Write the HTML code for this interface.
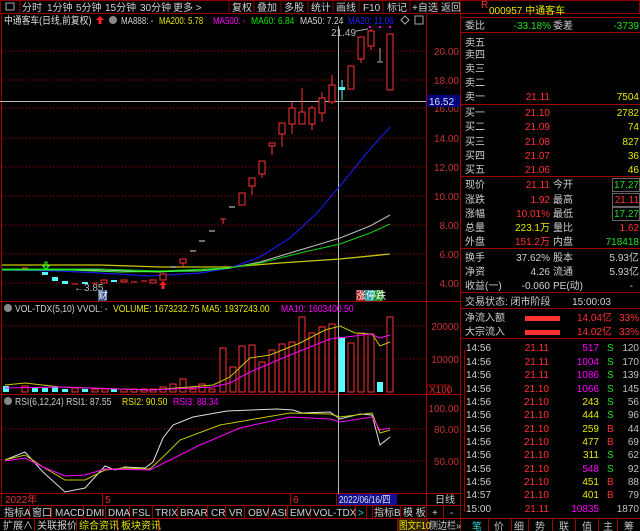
<!DOCTYPE html>
<html><head><meta charset="utf-8"><style>
html,body{margin:0;padding:0;background:#000;width:640px;height:531px;overflow:hidden}
svg{display:block}
text{font-family:"Liberation Sans","Noto Sans CJK SC",sans-serif;font-size:10px}
</style></head><body>
<svg width="640" height="531" viewBox="0 0 640 531" xmlns="http://www.w3.org/2000/svg">
<rect width="640" height="531" fill="#000"/>
<g fill="none" stroke="#8b0000">
<rect x="0.5" y="0.5" width="639" height="13"/>
<line x1="229" y1="0" x2="229" y2="13"/><line x1="254" y1="0" x2="254" y2="13"/><line x1="281" y1="0" x2="281" y2="13"/><line x1="308" y1="0" x2="308" y2="13"/><line x1="333" y1="0" x2="333" y2="13"/><line x1="359" y1="0" x2="359" y2="13"/><line x1="383" y1="0" x2="383" y2="13"/><line x1="410" y1="0" x2="410" y2="13"/><line x1="437" y1="0" x2="437" y2="13"/>
<line x1="20" y1="0" x2="20" y2="13"/>
</g>
<rect x="6" y="3" width="8" height="7" fill="none" stroke="#aaa"/>
<g fill="#d0d0d0">
<text x="22" y="11">分时</text><text x="47" y="11">1分钟</text><text x="76" y="11">5分钟</text><text x="105" y="11">15分钟</text><text x="140" y="11">30分钟</text><text x="173" y="11">更多 &gt;</text>
<text x="232" y="11">复权</text><text x="257" y="11">叠加</text><text x="284" y="11">多股</text><text x="311" y="11">统计</text><text x="336" y="11">画线</text><text x="363" y="11">F10</text><text x="387" y="11">标记</text><text x="412" y="11">+自选</text><text x="441" y="11">返回</text>
</g>
<g stroke="#a00000" fill="none">
<line x1="1.5" y1="14" x2="1.5" y2="505"/>
<line x1="426.5" y1="14" x2="426.5" y2="505"/>
<line x1="460.5" y1="0" x2="460.5" y2="531"/>
<line x1="0" y1="301.5" x2="460" y2="301.5"/>
<line x1="0" y1="394.5" x2="460" y2="394.5"/>
<line x1="0" y1="493.5" x2="460" y2="493.5"/>
<line x1="0" y1="505.5" x2="460" y2="505.5"/>
<line x1="0" y1="518.5" x2="640" y2="518.5"/>
</g>
<text transform="translate(4 24) scale(0.88 1)" fill="#e0e0e0" font-size="10">中通客车(日线,前复权)</text>
<g font-size="10">
<text transform="translate(121 24) scale(0.8 1)" fill="#d0d0d0">MA888: -</text>
<text transform="translate(159 24) scale(0.78 1)" fill="#e6e600">MA200: 5.78</text>
<text transform="translate(213 24) scale(0.8 1)" fill="#ff00ff">MA500: -</text>
<text transform="translate(251 24) scale(0.85 1)" fill="#00e600">MA60: 6.84</text>
<text transform="translate(300 24) scale(0.85 1)" fill="#d0d0d0">MA50: 7.24</text>
<text transform="translate(348 24) scale(0.82 1)" fill="#2020ff">MA20: 11.06</text>
</g>
<path d="M100 16 l4 4 h-2.5 v4 h-3 v-4 h-2.5z" fill="#ff2020"/>
<circle cx="113" cy="20" r="4" fill="#888"/>
<path d="M405 16 l4 4 l-4 4 l-4 -4z" fill="none" stroke="#aaa"/>
<rect x="415" y="16" width="8" height="8" fill="none" stroke="#aaa"/>
<g stroke="#a00000" stroke-dasharray="1,2">
<line x1="2" y1="51" x2="426" y2="51"/><line x1="2" y1="80" x2="426" y2="80"/><line x1="2" y1="108" x2="426" y2="108"/><line x1="2" y1="138" x2="426" y2="138"/><line x1="2" y1="167" x2="426" y2="167"/><line x1="2" y1="196" x2="426" y2="196"/><line x1="2" y1="225" x2="426" y2="225"/><line x1="2" y1="254" x2="426" y2="254"/><line x1="2" y1="283" x2="426" y2="283"/>
<line x1="2" y1="326" x2="426" y2="326"/><line x1="2" y1="359" x2="426" y2="359"/>
<line x1="2" y1="429" x2="426" y2="429"/><line x1="2" y1="461" x2="426" y2="461"/>
</g>
<g fill="#c83030" text-anchor="end" font-size="11">
<text x="459" y="55">20.00</text><text x="459" y="84">18.00</text><text x="459" y="112">16.00</text><text x="459" y="142">14.00</text><text x="459" y="171">12.00</text><text x="459" y="200">10.00</text><text x="459" y="229">8.00</text><text x="459" y="258">6.00</text><text x="459" y="287">4.00</text>
<text x="459" y="330">20000</text><text x="459" y="363">10000</text>
<text x="459" y="412">100.00</text><text x="459" y="433">80.00</text><text x="459" y="465">50.00</text>
</g>
<rect x="427" y="385" width="22" height="9" fill="none" stroke="#a00000"/>
<text x="429" y="393" fill="#c83030" font-size="9.5">X100</text>
<line x1="0" y1="101.5" x2="426" y2="101.5" stroke="#bbb"/>
<line x1="338.5" y1="26" x2="338.5" y2="505" stroke="#bbb"/>
<rect x="427" y="95" width="33" height="12" fill="#000080"/>
<text x="429" y="105" fill="#e0e0e0" font-size="11">16.52</text>
<polyline fill="none" stroke="#c8c800" stroke-width="1.3" points="2,265 100,265 160,267 230,267 280,263 340,259 390,254"/>
<polyline fill="none" stroke="#1818e0" stroke-width="1.2" points="2,270 60,271 100,273 150,276 200,273 230,268 260,257 290,238 315,215 340,186 365,155 390,127"/>
<polyline fill="none" stroke="#bbb" stroke-width="1.1" points="2,270 100,270 160,272 230,268 260,262 300,250 340,238 370,226 390,215"/>
<polyline fill="none" stroke="#10d010" stroke-width="1.1" points="2,269 100,269 160,271 230,268 260,263 300,253 340,244 370,233 390,224"/>
<polyline fill="none" stroke="#30ff30" stroke-width="1" points="2,270 70,270 120,272 200,271 230,268"/>
<g stroke="#ff3232" fill="#000">
<line x1="292" y1="102" x2="292" y2="134"/><rect x="289" y="108" width="6" height="16"/>
<line x1="302" y1="88" x2="302" y2="124"/><rect x="299" y="112" width="6" height="12"/>
<line x1="312" y1="106" x2="312" y2="130"/><rect x="309" y="108" width="6" height="16"/>
<line x1="322" y1="92" x2="322" y2="122"/><rect x="319" y="98" width="6" height="15"/>
<line x1="332" y1="75" x2="332" y2="104"/><rect x="329" y="85" width="6" height="17"/>
<rect x="348" y="66" width="6" height="23"/>
<line x1="361" y1="37" x2="361" y2="63"/><rect x="358" y="37" width="6" height="22"/>
<line x1="371" y1="29" x2="371" y2="50"/><rect x="368" y="31" width="6" height="15"/>
<rect x="387" y="34" width="6" height="56"/>
<line x1="282" y1="123" x2="282" y2="147"/><rect x="279" y="123" width="6" height="11"/>
<line x1="272" y1="143" x2="272" y2="155"/><rect x="269" y="143" width="6" height="3"/>
<line x1="262" y1="161" x2="262" y2="178"/><rect x="259" y="161" width="6" height="13"/>
<line x1="252" y1="178" x2="252" y2="195"/><rect x="249" y="178" width="6" height="8"/>
<rect x="239" y="193" width="6" height="12"/>
<line x1="223" y1="219" x2="223" y2="224"/><line x1="220" y1="219" x2="226" y2="219"/>
<line x1="183" y1="259" x2="183" y2="268"/><rect x="180" y="259" width="6" height="4"/>
<rect x="160" y="274" width="6" height="6"/>
<rect x="150" y="280" width="6" height="3"/>
<line x1="131" y1="282" x2="137" y2="282"/><line x1="141" y1="281" x2="147" y2="281"/>
<rect x="121" y="280" width="6" height="2"/>
<rect x="101" y="280" width="6" height="3"/>
<line x1="92" y1="283" x2="98" y2="283"/><line x1="72" y1="284" x2="78" y2="284"/>
<line x1="22" y1="268" x2="28" y2="268"/>
</g>
<line x1="380" y1="48" x2="380" y2="62" stroke="#aaa"/><line x1="377" y1="62" x2="383" y2="62" stroke="#aaa"/>
<g stroke="#ddd"><line x1="229" y1="207" x2="235" y2="207"/><line x1="209" y1="231" x2="215" y2="231"/><line x1="199" y1="241" x2="205" y2="241"/><line x1="190" y1="251" x2="196" y2="251"/><line x1="170" y1="267" x2="176" y2="267"/></g>
<g fill="#54ffff">
<rect x="339" y="87" width="6" height="3"/><line x1="342" y1="80" x2="342" y2="100" stroke="#54ffff"/>
<rect x="111" y="280" width="6" height="2"/><rect x="82" y="282" width="6" height="2"/><rect x="62" y="281" width="6" height="3"/><rect x="52" y="277" width="6" height="4"/><rect x="42" y="272" width="6" height="3"/>
</g>
<path d="M45 262 v4 h-2 l3 3 l3 -3 h-2 v-4z" fill="none" stroke="#20ff20"/>
<path d="M163 281 l4 4 h-2.5 v4 h-3 v-4 h-2.5z" fill="#ff2020"/>
<text x="74" y="291" fill="#bbb" font-size="10">←3.85</text>
<rect x="98" y="290" width="9" height="11" fill="#30508a"/><text x="98" y="299" fill="#fff" font-size="9">财</text>
<text x="331" y="36" fill="#bbb" font-size="10">21.49</text>
<line x1="356" y1="31" x2="368" y2="29" stroke="#aaa"/>
<g fill="#ff00ff"><rect x="369" y="26" width="2" height="2"/><rect x="379" y="26" width="2" height="2"/><rect x="389" y="26" width="2" height="2"/></g>
<rect x="356" y="290" width="9" height="11" fill="#a02020"/><rect x="365" y="290" width="9" height="11" fill="#20a0a0"/><rect x="374" y="290" width="9" height="11" fill="#209020"/>
<text x="356" y="299" fill="#fff" font-size="9">涨停跌</text>
<circle cx="8" cy="308" r="4" fill="#888"/>
<g font-size="10">
<text transform="translate(15 312) scale(0.86 1)" fill="#d0d0d0">VOL-TDX(5,10) VVOL: -</text>
<text transform="translate(113 312) scale(0.86 1)" fill="#e6e600">VOLUME: 1673232.75 MA5: 1937243.00</text>
<text transform="translate(281 312) scale(0.86 1)" fill="#ff00ff">MA10: 1603400.50</text>
</g>
<g stroke="#ff3232" fill="#000">
<rect x="220" y="348" width="6" height="44"/><rect x="230" y="367" width="6" height="25"/><rect x="239" y="346" width="6" height="46"/><rect x="249" y="345" width="6" height="47"/><rect x="259" y="362" width="6" height="30"/><rect x="269" y="350" width="6" height="42"/><rect x="279" y="344" width="6" height="48"/><rect x="289" y="342" width="6" height="50"/><rect x="299" y="317" width="6" height="75"/><rect x="309" y="333" width="6" height="59"/><rect x="319" y="327" width="6" height="65"/><rect x="329" y="324" width="6" height="68"/><rect x="348" y="343" width="6" height="49"/><rect x="358" y="333" width="6" height="59"/><rect x="368" y="334" width="6" height="58"/><rect x="387" y="317" width="6" height="75"/>
<rect x="160" y="387" width="6" height="5"/><rect x="170" y="384" width="6" height="8"/><rect x="180" y="379" width="6" height="13"/><rect x="190" y="389" width="6" height="3"/><rect x="199" y="384" width="6" height="8"/><rect x="209" y="389" width="6" height="3"/>
<rect x="22" y="386" width="6" height="6"/><rect x="72" y="388" width="6" height="4"/><rect x="92" y="389" width="6" height="3"/><rect x="102" y="389" width="6" height="3"/><rect x="121" y="389" width="6" height="3"/><rect x="131" y="389" width="6" height="3"/><rect x="141" y="389" width="6" height="3"/><rect x="150" y="389" width="6" height="3"/>
</g>
<g fill="#54ffff">
<rect x="339" y="337" width="6" height="55"/><rect x="377" y="382" width="6" height="10"/>
<rect x="3" y="386" width="6" height="6"/><rect x="32" y="387" width="6" height="5"/><rect x="42" y="388" width="6" height="4"/><rect x="52" y="387" width="6" height="5"/><rect x="62" y="389" width="6" height="3"/><rect x="82" y="389" width="6" height="3"/><rect x="111" y="389" width="6" height="3"/>
</g>
<polyline fill="none" stroke="#c8c800" points="5,385 25,383 60,387 150,390 190,387 213,385 230,377 250,358 270,355 300,343 325,330 340,326 355,333 372,334 380,346 390,342"/>
<polyline fill="none" stroke="#ff00ff" points="5,388 60,387 150,390 213,387 230,383 250,372 290,355 330,339 355,336 370,334 380,338 390,335"/>
<circle cx="8" cy="401" r="4" fill="#888"/>
<g font-size="10">
<text transform="translate(15 405) scale(0.86 1)" fill="#d0d0d0">RSI(6,12,24) RSI1: 87.55</text>
<text transform="translate(122 405) scale(0.86 1)" fill="#e6e600">RSI2: 90.50</text>
<text transform="translate(173 405) scale(0.86 1)" fill="#ff00ff">RSI3: 88.34</text>
</g>
<polyline fill="none" stroke="#ddd" points="5,460 25,452 43,472 65,492 85,488 105,466 115,470 125,467 145,468 153,462 163,438 173,425 193,417 227,411 277,409 293,410 302,413 330,412 340,419 360,414 372,415 380,445 390,437"/>
<polyline fill="none" stroke="#c8c800" points="5,460 25,455 43,467 65,480 85,480 105,470 125,468 150,469 165,455 180,440 220,425 290,413 330,414 340,417 372,413 380,433 390,430"/>
<polyline fill="none" stroke="#ff00ff" points="5,461 25,458 43,467 65,476 85,475 105,469 150,470 200,445 240,428 290,417 330,419 340,422 372,417 380,430 390,428"/>
<g stroke="#a00000"><line x1="102.5" y1="494" x2="102.5" y2="505"/><line x1="290.5" y1="494" x2="290.5" y2="505"/><line x1="336.5" y1="494" x2="336.5" y2="505"/></g>
<text x="5" y="503" fill="#e03030">2022年</text><text x="105" y="503" fill="#e03030">5</text><text x="293" y="503" fill="#e03030">6</text>
<rect x="338" y="494" width="59" height="11" fill="#101090"/><text transform="translate(339 503) scale(0.82 1)" fill="#e0e0e0" font-size="10">2022/06/16/四</text>
<text x="435" y="503" fill="#d0d0d0">日线</text>
<g stroke="#a00000"><line x1="29.5" y1="506" x2="29.5" y2="518"/><line x1="51.5" y1="506" x2="51.5" y2="518"/><line x1="83.5" y1="506" x2="83.5" y2="518"/><line x1="105.5" y1="506" x2="105.5" y2="518"/><line x1="129.5" y1="506" x2="129.5" y2="518"/><line x1="152.5" y1="506" x2="152.5" y2="518"/><line x1="177.5" y1="506" x2="177.5" y2="518"/><line x1="207.5" y1="506" x2="207.5" y2="518"/><line x1="225.5" y1="506" x2="225.5" y2="518"/><line x1="244.5" y1="506" x2="244.5" y2="518"/><line x1="268.5" y1="506" x2="268.5" y2="518"/><line x1="287.5" y1="506" x2="287.5" y2="518"/><line x1="310.5" y1="506" x2="310.5" y2="518"/><line x1="355.5" y1="506" x2="355.5" y2="518"/><line x1="366.5" y1="506" x2="366.5" y2="518"/><line x1="372.5" y1="506" x2="372.5" y2="518"/><line x1="400.5" y1="506" x2="400.5" y2="518"/><line x1="426.5" y1="506" x2="426.5" y2="518"/><line x1="443.5" y1="506" x2="443.5" y2="518"/></g>
<g fill="#d0d0d0" font-size="9">
<text x="4" y="516">指标A</text><text x="32" y="516">窗口</text><text x="55" y="516">MACD</text><text x="86" y="516">DMI</text><text x="108" y="516">DMA</text><text x="132" y="516">FSL</text><text x="155" y="516">TRIX</text><text x="180" y="516">BRAR</text><text x="211" y="516">CR</text><text x="229" y="516">VR</text><text x="248" y="516">OBV</text><text x="271" y="516">ASI</text><text x="290" y="516">EMV</text><text x="313" y="516">VOL-TDX</text><text x="374" y="516">指标B</text><text x="403" y="516">模 板</text><text x="432" y="516" font-size="10">+</text><text x="450" y="516" font-size="10">-</text>
</g>
<text x="358" y="516" fill="#30d0d0">&gt;</text>
<g stroke="#a00000"><line x1="34.5" y1="519" x2="34.5" y2="531"/><line x1="76.5" y1="519" x2="76.5" y2="531"/><line x1="117.5" y1="519" x2="117.5" y2="531"/><line x1="158.5" y1="519" x2="158.5" y2="531"/><line x1="397.5" y1="519" x2="397.5" y2="531"/><line x1="427.5" y1="519" x2="427.5" y2="531"/></g>
<g fill="#d0d0d0" font-size="9"><text x="3" y="529">扩展∧</text><text x="37" y="529">关联报价</text><text transform="translate(429 529) scale(0.9 1)">侧边栏»</text></g>
<g fill="#e6e600" font-size="9"><text x="79" y="529">综合资讯</text><text x="121" y="529">板块资讯</text></g>
<rect x="398" y="519" width="29" height="12" fill="#302000"/><text transform="translate(399 529) scale(0.85 1)" fill="#e6e600" font-size="9">图文F10</text>
<g stroke="#a00000">
<line x1="461" y1="17.5" x2="640" y2="17.5"/><line x1="461" y1="32.5" x2="640" y2="32.5"/><line x1="461" y1="104.5" x2="640" y2="104.5"/><line x1="461" y1="176.5" x2="640" y2="176.5"/><line x1="461" y1="248.5" x2="640" y2="248.5"/><line x1="461" y1="292.5" x2="640" y2="292.5"/><line x1="461" y1="308.5" x2="640" y2="308.5"/><line x1="461" y1="338.5" x2="640" y2="338.5"/><line x1="464.5" y1="350" x2="464.5" y2="512"/>
</g>
<text x="481" y="8" fill="#ff3030" font-size="7">R</text>
<text x="489" y="14" fill="#e6e600" font-size="13">000957 中通客车</text>
<g fill="#d0d0d0" font-size="11.5">
<text x="465" y="29">委比</text><text x="553" y="29">委差</text>
<text x="465" y="46">卖五</text><text x="465" y="58">卖四</text><text x="465" y="72">卖三</text><text x="465" y="86">卖二</text><text x="465" y="100">卖一</text>
<text x="465" y="116">买一</text><text x="465" y="130">买二</text><text x="465" y="145">买三</text><text x="465" y="159">买四</text><text x="465" y="173">买五</text>
<text x="465" y="188">现价</text><text x="553" y="188">今开</text>
<text x="465" y="203">涨跌</text><text x="553" y="203">最高</text>
<text x="465" y="217">涨幅</text><text x="553" y="217">最低</text>
<text x="465" y="231">总量</text><text x="553" y="231">量比</text>
<text x="465" y="245">外盘</text><text x="553" y="245">内盘</text>
<text x="465" y="261">换手</text><text x="553" y="261">股本</text>
<text x="465" y="275">净资</text><text x="553" y="275">流通</text>
<text x="465" y="289">收益(一)</text><text x="553" y="289">PE(动)</text>
<text x="465" y="305">交易状态: 闭市阶段</text>
<text x="465" y="321">净流入额</text><text x="465" y="335">大宗流入</text>
</g>
<g text-anchor="end" font-size="11.5">
<text x="551" y="29" fill="#20e020">-33.18%</text><text x="639" y="29" fill="#20e020">-3739</text>
<g fill="#ff3232"><text x="550" y="100">21.11</text><text x="550" y="116">21.10</text><text x="550" y="130">21.09</text><text x="550" y="145">21.08</text><text x="550" y="159">21.07</text><text x="550" y="173">21.06</text>
<text x="550" y="188">21.11</text><text x="550" y="203">1.92</text><text x="550" y="217">10.01%</text><text x="550" y="245">151.2万</text><text x="639" y="231">1.62</text><text x="639" y="203">21.11</text>
<text x="612" y="321">14.04亿</text><text x="639" y="321">33%</text><text x="612" y="335">14.02亿</text><text x="639" y="335">33%</text></g>
<g fill="#e6e600"><text x="639" y="100">7504</text><text x="639" y="116">2782</text><text x="639" y="130">74</text><text x="639" y="145">827</text><text x="639" y="159">36</text><text x="639" y="173">46</text><text x="550" y="231">223.1万</text></g>
<g fill="#20e020"><text x="639" y="188">17.27</text><text x="639" y="217">17.27</text><text x="639" y="245">718418</text></g>
<g fill="#d0d0d0"><text x="550" y="261">37.62%</text><text x="639" y="261">5.93亿</text><text x="550" y="275">4.26</text><text x="639" y="275">5.93亿</text><text x="550" y="289">-0.060</text><text x="633" y="289">-</text><text x="611" y="305">15:00:03</text></g>
</g>
<g fill="none" stroke="#666"><rect x="612.5" y="178.5" width="27" height="13"/><rect x="612.5" y="193.5" width="27" height="13"/><rect x="612.5" y="207.5" width="27" height="13"/></g>
<rect x="525" y="316" width="35" height="5" fill="#ff3232"/><rect x="525" y="330" width="35" height="5" fill="#ff3232"/>
<g font-size="11.5">
<g fill="#d0d0d0"><text x="466" y="351">14:56</text><text x="466" y="365">14:56</text><text x="466" y="378">14:56</text><text x="466" y="392">14:56</text><text x="466" y="405">14:56</text><text x="466" y="418">14:56</text><text x="466" y="432">14:56</text><text x="466" y="445">14:56</text><text x="466" y="458">14:56</text><text x="466" y="472">14:56</text><text x="466" y="485">14:56</text><text x="466" y="498">14:57</text><text x="466" y="512">15:00</text></g>
<g fill="#ff3232" text-anchor="end"><text x="549" y="351">21.11</text><text x="549" y="365">21.11</text><text x="549" y="378">21.11</text><text x="549" y="392">21.10</text><text x="549" y="405">21.10</text><text x="549" y="418">21.10</text><text x="549" y="432">21.10</text><text x="549" y="445">21.10</text><text x="549" y="458">21.10</text><text x="549" y="472">21.10</text><text x="549" y="485">21.10</text><text x="549" y="498">21.10</text><text x="549" y="512">21.11</text></g>
<g text-anchor="end"><text x="599" y="351" fill="#ff00ff">517</text><text x="599" y="365" fill="#ff00ff">1004</text><text x="599" y="378" fill="#ff00ff">1086</text><text x="599" y="392" fill="#ff00ff">1066</text><text x="599" y="405" fill="#e6e600">243</text><text x="599" y="418" fill="#e6e600">444</text><text x="599" y="432" fill="#e6e600">259</text><text x="599" y="445" fill="#e6e600">477</text><text x="599" y="458" fill="#e6e600">311</text><text x="599" y="472" fill="#ff00ff">548</text><text x="599" y="485" fill="#e6e600">451</text><text x="599" y="498" fill="#e6e600">401</text><text x="599" y="512" fill="#ff00ff">10835</text></g>
<g><text x="607" y="351" fill="#20e020">S</text><text x="607" y="365" fill="#20e020">S</text><text x="607" y="378" fill="#20e020">S</text><text x="607" y="392" fill="#20e020">S</text><text x="607" y="405" fill="#20e020">S</text><text x="607" y="418" fill="#20e020">S</text><text x="607" y="432" fill="#ff3232">B</text><text x="607" y="445" fill="#ff3232">B</text><text x="607" y="458" fill="#20e020">S</text><text x="607" y="472" fill="#20e020">S</text><text x="607" y="485" fill="#ff3232">B</text><text x="607" y="498" fill="#ff3232">B</text></g>
<g fill="#c0c0c0" text-anchor="end"><text x="639" y="351">120</text><text x="639" y="365">170</text><text x="639" y="378">139</text><text x="639" y="392">145</text><text x="639" y="405">56</text><text x="639" y="418">96</text><text x="639" y="432">44</text><text x="639" y="445">69</text><text x="639" y="458">62</text><text x="639" y="472">92</text><text x="639" y="485">88</text><text x="639" y="498">79</text><text x="639" y="512">1870</text></g>
</g>
<g stroke="#a00000"><line x1="488.5" y1="519" x2="488.5" y2="531"/><line x1="511.5" y1="519" x2="511.5" y2="531"/><line x1="528.5" y1="519" x2="528.5" y2="531"/><line x1="552.5" y1="519" x2="552.5" y2="531"/><line x1="575.5" y1="519" x2="575.5" y2="531"/><line x1="598.5" y1="519" x2="598.5" y2="531"/><line x1="617.5" y1="519" x2="617.5" y2="531"/></g>
<g font-size="11"><text x="472" y="530" fill="#30d0d0">笔</text><g fill="#c0c0c0"><text x="494" y="530">价</text><text x="514" y="530">细</text><text x="535" y="530">势</text><text x="559" y="530">联</text><text x="582" y="530">值</text><text x="603" y="530">主</text><text x="624" y="530">筹</text></g></g>
</svg>
</body></html>
